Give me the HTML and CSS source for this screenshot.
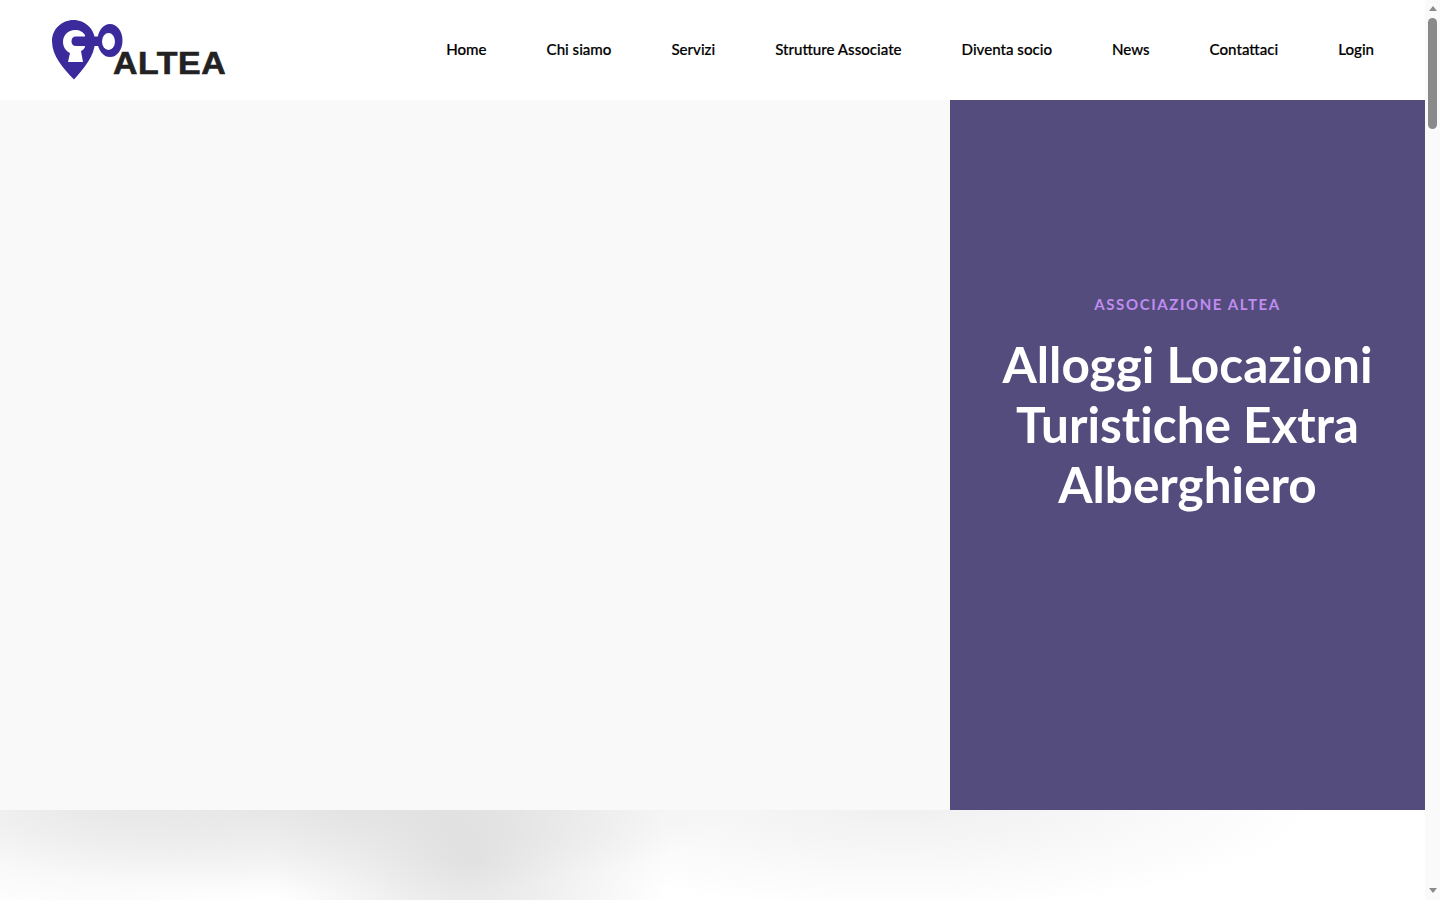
FILE: index.html
```html
<!DOCTYPE html>
<html>
<head>
    <title>Go Altea</title>
    <link rel="stylesheet" href="styles.css">
</head>
<body>
    <header class="site-header">
        <a class="logo" href="#">
            <svg class="logo-mark" width="76" height="64" viewBox="0 0 76 64">
                <path class="logo-purple" d="M25.500 4C37 4 47 13 47 25C47 40 36 52 26 63.500C15 52 4 40 4 25C4 13 14 4 25.500 4Z"/>
                <path class="logo-white" d="M15 26C15 19 20 14 27 14C32 14 35 16 37 19L37 31C36 33 35 34 33 35L35 46L20 46L22 37C18 35 15 31 15 26Z"/>
                <path class="logo-purple" d="M28 20.500L54 20.500L54 30L28 30C25 30 23.500 28 23.500 25.250C23.500 22.500 25 20.500 28 20.500Z"/>
                <ellipse class="logo-purple" cx="62" cy="24.500" rx="12.500" ry="16.500"/>
                <ellipse class="logo-white" cx="60.500" cy="25.500" rx="6.500" ry="8.500"/>
            </svg>
            <span class="logo-text">ALTEA</span>
        </a>
        <nav class="main-nav">
            <a href="#">Home</a>
            <a href="#">Chi siamo</a>
            <a href="#">Servizi</a>
            <a href="#">Strutture Associate</a>
            <a href="#">Diventa socio</a>
            <a href="#">News</a>
            <a href="#">Contattaci</a>
            <a href="#">Login</a>
        </nav>
    </header>

    <section class="hero">
        <div class="hero-media"></div>
        <div class="hero-panel">
            <p class="hero-label">ASSOCIAZIONE ALTEA</p>
            <h1>Alloggi Locazioni Turistiche Extra Alberghiero</h1>
        </div>
    </section>

    <section class="clouds"></section>

    <div class="scrollbar">
        <span class="scroll-up"></span>
        <span class="scroll-thumb"></span>
        <span class="scroll-down"></span>
    </div>
</body>
</html>
```

FILE: styles.css
```css
body {
    background-color: #fff;
    font-family: "Lato", "Open Sans", sans-serif;
    margin: 0;
    padding-right: 15px;
}

.site-header {
    display: flex;
    align-items: center;
    justify-content: space-between;
    height: 100px;
    padding: 0 51px 0 48px;
    background-color: #fff;
}

.logo {
    display: flex;
    align-items: flex-start;
    width: 180px;
    height: 68px;
    text-decoration: none;
}

.logo-mark {
    flex: none;
}

.logo-purple {
    fill: #3a2a9c;
}

.logo-white {
    fill: #fff;
}

.logo-text {
    margin: 33px 0 0 -11px;
    color: #222;
    font-family: "Liberation Sans", Arial, sans-serif;
    font-size: 32px;
    font-weight: bold;
    line-height: 28px;
    letter-spacing: 0.5px;
    -webkit-text-stroke: 0.6px #222;
    transform: scaleX(1.06);
    transform-origin: left center;
}

.main-nav {
    display: flex;
    gap: 60px;
    margin-bottom: 2px;
}

.main-nav a {
    color: #000;
    font-size: 15.1px;
    font-weight: 500;
    text-decoration: none;
    -webkit-text-stroke: 0.2px #000;
}

.hero {
    display: flex;
    height: 710px;
}

.hero-media {
    flex: 1;
    background-color: #f9f9f9;
}

.hero-panel {
    display: flex;
    flex-direction: column;
    align-items: center;
    box-sizing: border-box;
    width: 475px;
    padding: 194px 30px 0;
    background-color: #544c7d;
    text-align: center;
}

.hero-label {
    margin: 0 0 20px;
    color: #c08cf0;
    font-size: 15px;
    font-weight: 700;
    line-height: 20px;
    letter-spacing: 1.6px;
}

.hero-panel h1 {
    margin: 0;
    color: #fff;
    font-size: 49.5px;
    font-variant-ligatures: none;
    font-weight: 700;
    line-height: 60px;
}

.clouds {
    height: 90px;
    background-color: #fff;
    background-image:
        radial-gradient(ellipse 200px 170px at 470px 50px, rgba(205, 205, 205, 0.55), rgba(205, 205, 205, 0) 100%),
        radial-gradient(ellipse 420px 95px at 320px -10px, rgba(220, 220, 220, 0.7), rgba(220, 220, 220, 0) 100%),
        radial-gradient(ellipse 300px 120px at 100px -10px, rgba(225, 225, 225, 0.6), rgba(225, 225, 225, 0) 100%),
        radial-gradient(ellipse 420px 110px at 900px -10px, rgba(235, 235, 235, 0.8), rgba(235, 235, 235, 0) 100%);
}

/* the reference was taken with a classic scrollbar showing */
.scrollbar {
    position: fixed;
    top: 0;
    right: 0;
    bottom: 0;
    display: flex;
    flex-direction: column;
    align-items: center;
    box-sizing: border-box;
    width: 15px;
    padding: 6px 0 7px;
    background-color: #fafafa;
}

.scroll-up {
    border-right: 4.500px solid transparent;
    border-bottom: 5px solid #8a8a8a;
    border-left: 4.500px solid transparent;
}

.scroll-thumb {
    width: 9px;
    height: 111px;
    margin-top: 7px;
    border-radius: 5px;
    background-color: #8a8a8a;
}

.scroll-down {
    margin-top: auto;
    border-top: 5px solid #8a8a8a;
    border-right: 4.500px solid transparent;
    border-left: 4.500px solid transparent;
}
```
